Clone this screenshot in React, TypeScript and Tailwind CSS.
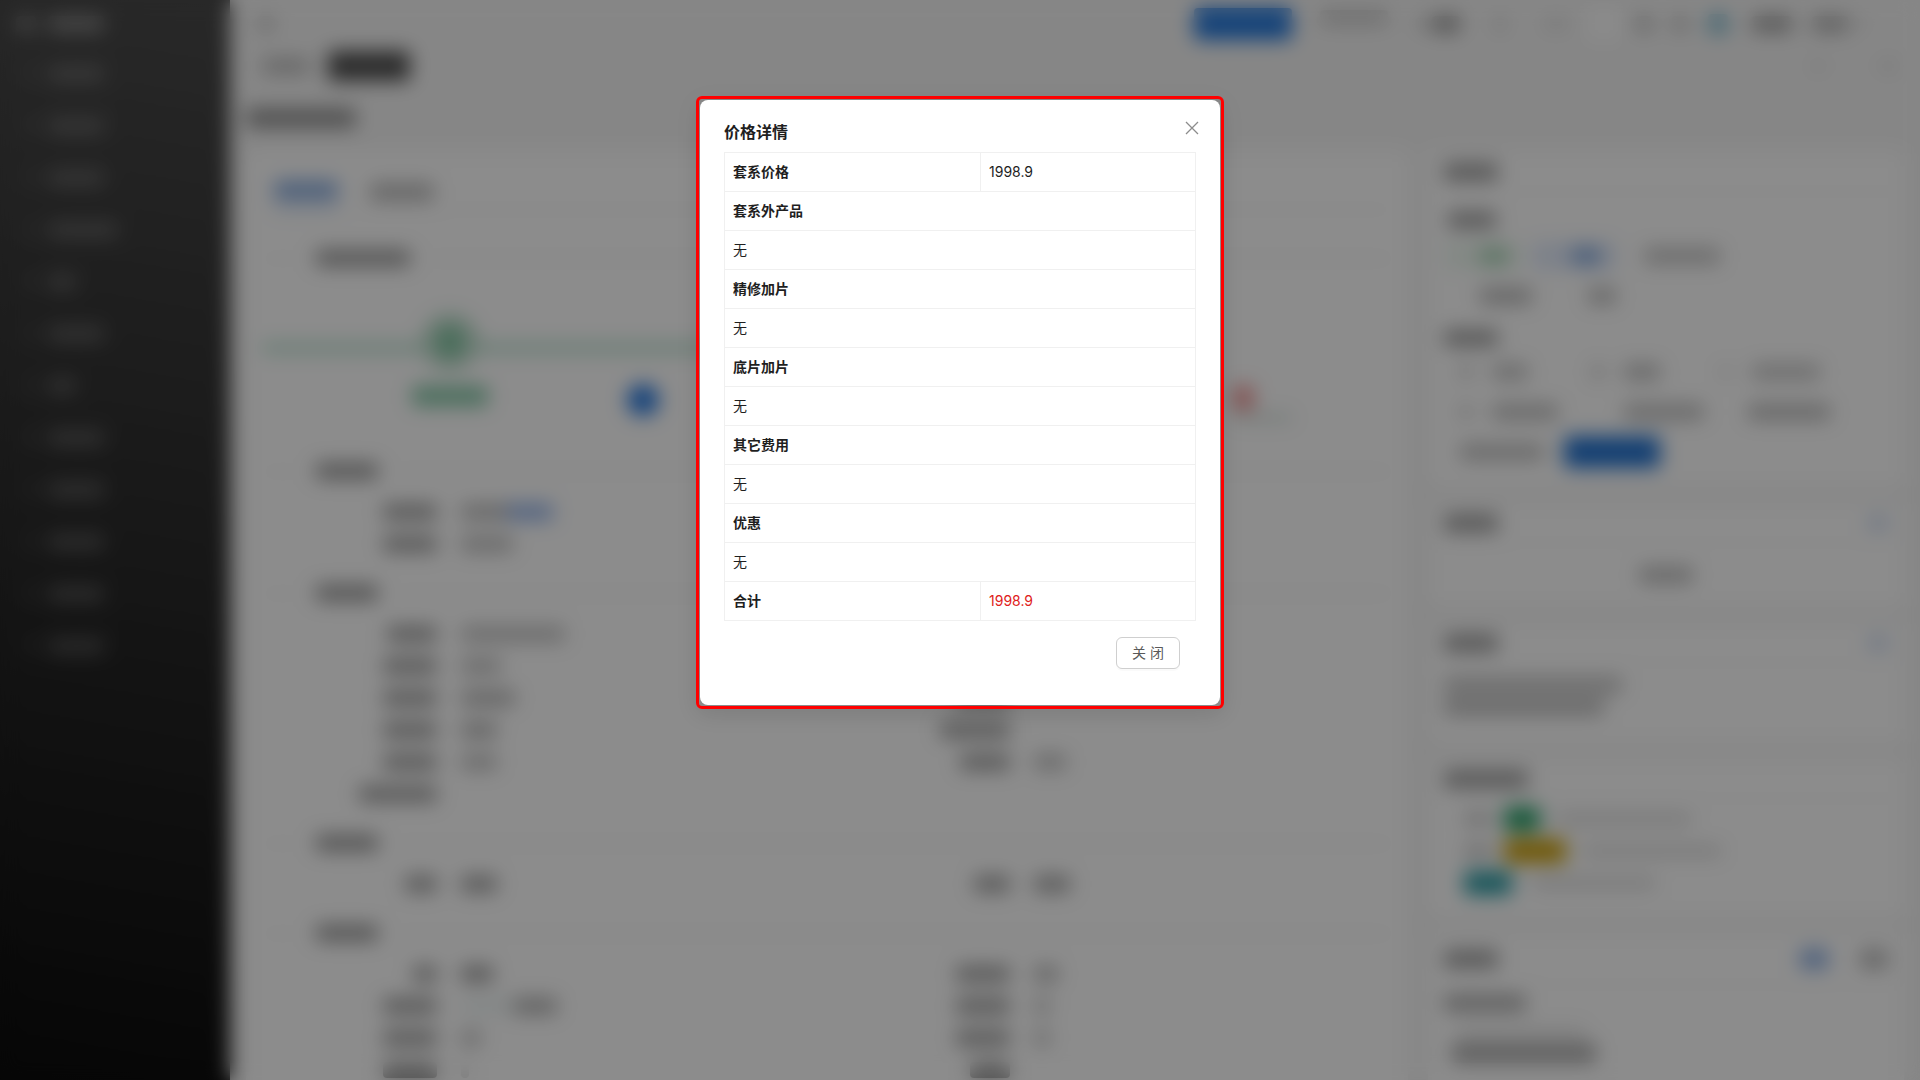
import { Fragment } from "react";
import type { ReactNode } from "react";

const FONT = 'font-[Inter,"Noto_Sans_CJK_SC",sans-serif]';

/* Placeholder block standing in for page text behind the frosted mask. */
function Bar({ c }: { c: string }) {
  return <span className={`block shrink-0 rounded-sm ${c}`} />;
}

const NAV = [
  "w-14", "w-14", "w-14", "w-[70px]", "w-7", "w-14",
  "w-7", "w-14", "w-14", "w-14", "w-14", "w-14",
];

function Sidebar() {
  return (
    <nav className="w-[230px] shrink-0 bg-linear-[190deg] from-[#4a4a4a] to-[#080808]">
      <div className="flex h-12 items-center gap-3 pl-4">
        <Bar c="h-4 w-5 bg-[#7c7c7c]" />
        <Bar c="h-4 w-14 bg-[#868686]" />
      </div>
      <ul>
        {NAV.map((w, i) => (
          <li key={i} className="flex h-[52px] items-center gap-3 pl-6">
            <Bar c="h-3 w-3 bg-white/10" />
            <Bar c={`h-4 bg-white/20 ${w}`} />
          </li>
        ))}
      </ul>
    </nav>
  );
}

function TopBar() {
  return (
    <header className="flex h-12 items-center pr-10 pl-3">
      <Bar c="h-4 w-4 bg-[#c8c8c8]" />
      <div className="ml-auto flex items-center">
        <Bar c="h-8 w-[98px] bg-[#2579dc]" />
        <Bar c="mb-3 ml-7 h-4 w-[68px] bg-[#cecece]" />
        <Bar c="ml-7 h-3 w-3 bg-[#d0d0d0]" />
        <Bar c="ml-1 h-4 w-7 bg-[#989898]" />
        <Bar c="ml-9 h-4 w-2 bg-[#c8c8c8]" />
        <Bar c="ml-10 h-3 w-6 bg-[#dcdcdc]" />
        <Bar c="ml-5 h-6 w-8 bg-white" />
        <Bar c="ml-4 h-4 w-4 bg-[#bcbcbc]" />
        <Bar c="ml-5 h-4 w-4 bg-[#c4c4c4]" />
        <Bar c="ml-5 h-5 w-5 bg-[#82bdd2]" />
        <Bar c="ml-6 h-4 w-10 bg-[#a0a0a0]" />
        <Bar c="ml-5 h-4 w-9 bg-[#b0b0b0]" />
        <Bar c="ml-2 h-2 w-2 bg-[#c8c8c8]" />
      </div>
    </header>
  );
}

function Divider({ w }: { w: string }) {
  return (
    <div className="flex h-8 items-center gap-3">
      <span className="h-px w-[42px] bg-[#ececec]" />
      <Bar c={`h-4 bg-[#989898] ${w}`} />
      <span className="h-px flex-1 bg-[#e8e8e8]" />
    </div>
  );
}

type Pair = [string, string];

function Field({ pair }: { pair?: Pair }) {
  return (
    <div className="flex h-8 items-center gap-6">
      <div className="flex w-[175px] justify-end">{pair && <Bar c={`h-4 bg-[#a0a0a0] ${pair[0]}`} />}</div>
      {pair && <Bar c={`h-4 ${pair[1]}`} />}
    </div>
  );
}

function Section({ w, children }: { w: string; children: ReactNode }) {
  return (
    <section className="mb-[17px]">
      <Divider w={w} />
      <div className="mt-[9px] grid grid-cols-2 gap-x-4">{children}</div>
    </section>
  );
}

const CUSTOMER: (Pair | undefined)[] = [
  ["w-[54px]", "w-[92px] bg-linear-to-r from-[#bcbcbc] from-50% to-[#93b3ea] to-50%"], undefined,
  ["w-[54px]", "w-[52px] bg-[#c0c0c0]"], undefined,
];
const ORDER: (Pair | undefined)[] = [
  ["w-[50px]", "w-[104px] bg-[#c4c4c4]"], undefined,
  ["w-[54px]", "w-10 bg-[#c2c2c2]"], undefined,
  ["w-[54px]", "w-[54px] bg-[#b8b8b8]"], ["w-[54px]", "w-0"],
  ["w-[54px]", "w-9 bg-[#b6b6b6]"], ["w-[70px]", "w-0"],
  ["w-[54px]", "w-9 bg-[#c2c2c2]"], ["w-[50px]", "w-8 bg-[#c2c2c2]"],
  ["w-[78px]", "w-0"], undefined,
];
const STAFF: Pair[] = [["w-8", "w-9 bg-[#a0a0a0]"], ["w-9", "w-9 bg-[#a4a4a4]"]];
const SHOOT: Pair[] = [
  ["w-6", "w-8 bg-[#9c9c9c]"], ["w-[54px]", "w-6 bg-[#b8b8b8]"],
  ["w-[54px]", "w-[96px] bg-linear-to-r from-[#eef4f4] from-55% to-[#b0b0b0] to-55%"], ["w-[54px]", "w-4 bg-[#c6c6c6]"],
  ["w-[54px]", "w-5 bg-[#c4c4c4]"], ["w-[54px]", "w-4 bg-[#c6c6c6]"],
  ["w-[54px]", "w-2 bg-[#e0e0e0]"], ["w-10", "w-0"],
];

function Steps() {
  return (
    <div className="mt-7 grid h-[153px] grid-cols-3">
      <div className="relative">
        <span className="absolute inset-x-0 top-[42px] h-2 bg-[#aadcc6]" />
        <div className="relative flex flex-col items-center">
          <span className="mt-3 flex h-14 w-14 items-center justify-center rounded-full bg-[#b9dcc9]">
            <Bar c="h-6 w-5 bg-[#76c09a]" />
          </span>
          <Bar c="mt-4 h-5 w-[76px] bg-[#86c8a8]" />
        </div>
      </div>
      <div className="relative">
        <span className="absolute inset-x-0 top-[42px] h-2 bg-[#aadcc6]" />
        <span className="absolute top-[82px] -left-3 h-8 w-8 rounded-full bg-[#2578e0]" />
      </div>
      <div className="flex flex-col items-start pt-[84px] pl-[218px]">
        <Bar c="h-6 w-5 bg-[#ee8f8f]" />
        <Bar c="mt-1 h-2 w-[60px] bg-[#d5e0db]" />
      </div>
    </div>
  );
}

function MainCard() {
  return (
    <article className="min-w-0 flex-1 rounded-lg bg-white px-4">
      <div className="flex h-[58px] items-end gap-8 border-b border-[#eee] px-3">
        <span className="block w-16 border-b-2 border-[#7ba8e6] pb-2">
          <Bar c="h-[18px] w-16 bg-[#87abdf]" />
        </span>
        <span className="pb-2">
          <Bar c="h-[18px] w-16 bg-[#bcbcbc]" />
        </span>
      </div>
      <div className="mt-8">
        <Divider w="w-[94px]" />
        <Steps />
      </div>
      <Section w="w-[62px]">{CUSTOMER.map((p, i) => <Field key={i} pair={p} />)}</Section>
      <Section w="w-[62px]">{ORDER.map((p, i) => <Field key={i} pair={p} />)}</Section>
      <Section w="w-[62px]">{STAFF.map((p, i) => <Field key={i} pair={p} />)}</Section>
      <Section w="w-[62px]">{SHOOT.map((p, i) => <Field key={i} pair={p} />)}</Section>
    </article>
  );
}

function Card({ w, extra, head = "h-10", children }: { w: string; extra?: ReactNode; head?: string; children: ReactNode }) {
  return (
    <section className="rounded-lg bg-white">
      <div className={`flex items-center justify-between border-b border-[#f0f0f0] px-4 ${head}`}>
        <Bar c={`h-[18px] bg-[#a0a0a0] ${w}`} />
        {extra}
      </div>
      {children}
    </section>
  );
}

function SideCards() {
  return (
    <aside className="flex w-[476px] shrink-0 flex-col gap-4">
      <Card w="w-[54px]">
        <div className="flex h-[295px] flex-col px-4 pt-5">
          <Bar c="ml-1 h-4 w-12 bg-[#9c9c9c]" />
          <div className="mt-2 flex h-10 items-center gap-3">
            <span className="flex h-7 w-[76px] items-center justify-end rounded bg-[#eef8f1] pr-3"><Bar c="h-4 w-7 bg-[#a4d3b3]" /></span>
            <span className="flex h-7 w-[84px] items-center justify-end rounded bg-[#e2ebfb] pr-4"><Bar c="h-4 w-7 bg-[#7fa6dc]" /></span>
            <Bar c="ml-4 h-4 w-[76px] bg-[#c4c4c4]" />
          </div>
          <div className="flex h-10 items-center gap-14 pl-9">
            <Bar c="h-4 w-[52px] bg-[#b8b8b8]" />
            <Bar c="h-4 w-7 bg-[#bcbcbc]" />
          </div>
          <Bar c="mt-3.5 h-4 w-[54px] bg-[#9c9c9c]" />
          <div className="mt-1.5 flex h-10 items-center pl-4">
            <Bar c="h-4 w-3 bg-[#d0d0d0]" />
            <Bar c="ml-5 h-4 w-9 bg-[#c4c4c4]" />
            <Bar c="ml-16 h-4 w-3 bg-[#d0d0d0]" />
            <Bar c="ml-5 h-4 w-9 bg-[#c0c0c0]" />
            <Bar c="ml-[60px] h-3 w-3 bg-[#dedede]" />
            <Bar c="ml-5 h-4 w-[68px] bg-[#c8c8c8]" />
          </div>
          <div className="flex h-10 items-center pl-4">
            <Bar c="h-4 w-3 bg-[#d0d0d0]" />
            <Bar c="ml-5 h-4 w-[66px] bg-[#c0c0c0]" />
            <Bar c="ml-[66px] h-4 w-20 bg-[#c0c0c0]" />
            <Bar c="ml-11 h-4 w-[82px] bg-[#bcbcbc]" />
          </div>
          <div className="flex h-10 items-center gap-5 pl-4">
            <Bar c="h-4 w-[84px] bg-[#c0c0c0]" />
            <Bar c="h-8 w-24 bg-[#2272d0]" />
          </div>
        </div>
      </Card>
      <Card w="w-[54px]" extra={<Bar c="h-4 w-5 bg-[#cfdcf2]" />}>
        <div className="flex h-16 items-center justify-center">
          <Bar c="h-4 w-[54px] bg-[#bcbcbc]" />
        </div>
      </Card>
      <Card w="w-[54px]" extra={<Bar c="h-4 w-5 bg-[#cfdcf2]" />}>
        <div className="flex h-20 flex-col gap-1.5 px-4 pt-3.5">
          <Bar c="h-4 w-[178px] bg-[#c4c4c4]" />
          <Bar c="h-4 w-[160px] bg-[#bcbcbc]" />
        </div>
      </Card>
      <Card w="w-[84px]">
        <div className="h-[118px] pt-1 pl-9">
          <div className="flex h-8 items-center gap-3">
            <Bar c="h-3 w-7 bg-[#c4c4c4]" />
            <Bar c="h-6 w-9 bg-[#259f66]" />
            <Bar c="ml-1 h-3 w-[136px] bg-[#dcdcdc]" />
          </div>
          <div className="flex h-8 items-center gap-3">
            <Bar c="h-3 w-7 bg-[#c4c4c4]" />
            <Bar c="h-6 w-[62px] bg-[#cca008]" />
            <Bar c="ml-1 h-3 w-[140px] bg-[#dcdcdc]" />
          </div>
          <div className="flex h-8 items-center gap-3">
            <Bar c="h-6 w-12 bg-[#2b9ba4]" />
            <Bar c="ml-2 h-3 w-[124px] bg-[#dcdcdc]" />
          </div>
        </div>
      </Card>
      <Card
        w="w-[54px]"
        head="h-[52px]"
        extra={
          <span className="flex gap-8">
            <Bar c="h-5 w-7 bg-[#8db0e4]" />
            <Bar c="h-5 w-7 bg-[#bcbcbc]" />
          </span>
        }
      >
        <div className="h-40 px-4 pt-2.5">
          <Bar c="h-4 w-[82px] bg-[#ababab]" />
          <Bar c="mt-4 ml-3 h-2 w-[130px] bg-[#e0e0e0]" />
          <Bar c="mt-2 ml-2 h-5 w-[144px] bg-[#acacac]" />
        </div>
      </Card>
    </aside>
  );
}

function Backdrop() {
  return (
    <div aria-hidden="true" className="flex min-h-screen bg-[#f5f5f5]">
      <Sidebar />
      <div className="min-w-0 flex-1 px-4">
        <TopBar />
        <div className="flex h-9 items-center pl-4">
          <Bar c="mr-[18px] h-4 w-12 bg-[#bcbcbc]" />
          <Bar c="h-[30px] w-[82px] bg-[#505050]" />
          <span className="ml-auto flex gap-6 pr-2">
            <Bar c="h-3 w-3 bg-[#dcdcdc]" />
            <Bar c="h-2 w-2 bg-[#e4e4e4]" />
            <Bar c="h-3 w-4 bg-[#dcdcdc]" />
          </span>
        </div>
        <div className="flex h-[68px] items-center">
          <Bar c="h-5 w-[110px] bg-[#949494]" />
        </div>
        <div className="flex gap-5">
          <MainCard />
          <SideCards />
        </div>
      </div>
    </div>
  );
}

const GROUPS = [
  { name: "套系外产品", value: "无" },
  { name: "精修加片", value: "无" },
  { name: "底片加片", value: "无" },
  { name: "其它费用", value: "无" },
  { name: "优惠", value: "无" },
];

const CELL = "h-[39px] border border-[#f0f0f0] px-2 text-left";

function PriceTable() {
  return (
    <table aria-labelledby="price-title" className="mt-2 w-full table-fixed border-collapse text-sm text-[#1f1f1f]">
      <colgroup>
        <col className="w-[256px]" />
        <col />
      </colgroup>
      <tbody>
        <tr>
          <th scope="row" className={`${CELL} font-semibold`}>套系价格</th>
          <td className={CELL}>1998.9</td>
        </tr>
        {GROUPS.map((g) => (
          <Fragment key={g.name}>
            <tr>
              <th colSpan={2} className={`${CELL} font-semibold`}>{g.name}</th>
            </tr>
            <tr>
              <td colSpan={2} className={CELL}>{g.value}</td>
            </tr>
          </Fragment>
        ))}
        <tr>
          <th scope="row" className={`${CELL} font-semibold`}>合计</th>
          <td className={`${CELL} text-[#e02020]`}>1998.9</td>
        </tr>
      </tbody>
    </table>
  );
}

export default function App() {
  return (
    <div lang="zh-CN" className={`relative h-screen overflow-hidden ${FONT}`}>
      <Backdrop />
      <div className="absolute inset-0 flex items-start justify-center bg-black/45 pt-24 backdrop-blur-[10px]">
        <div className="w-[528px] rounded-md border-3 border-[#ff0000] p-px shadow-[0_6px_24px_rgba(0,0,0,0.12)]">
          <div role="dialog" aria-modal="true" aria-labelledby="price-title" className="relative rounded-lg bg-white px-6 pt-5 pb-9">
            <h2 id="price-title" className="text-base font-semibold text-[#1f1f1f]">价格详情</h2>
            <button type="button" aria-label="关闭对话框" className="absolute top-[17px] right-[17px] flex h-[22px] w-[22px] items-center justify-center text-[#8c8c8c]">
              <svg viewBox="0 0 14 14" className="h-3.5 w-3.5" fill="none" stroke="currentColor" strokeWidth="1.3" aria-hidden="true">
                <path d="M1 1l12 12M13 1L1 13" />
              </svg>
            </button>
            <PriceTable />
            <div className="mt-4 flex justify-end pr-4">
              <button type="button" className="h-8 rounded-md border border-[#cfcfcf] bg-white px-[15px] text-sm whitespace-nowrap text-[#595959] shadow-[0_2px_0_rgba(0,0,0,0.02)]">
                关 闭
              </button>
            </div>
          </div>
        </div>
      </div>
    </div>
  );
}
